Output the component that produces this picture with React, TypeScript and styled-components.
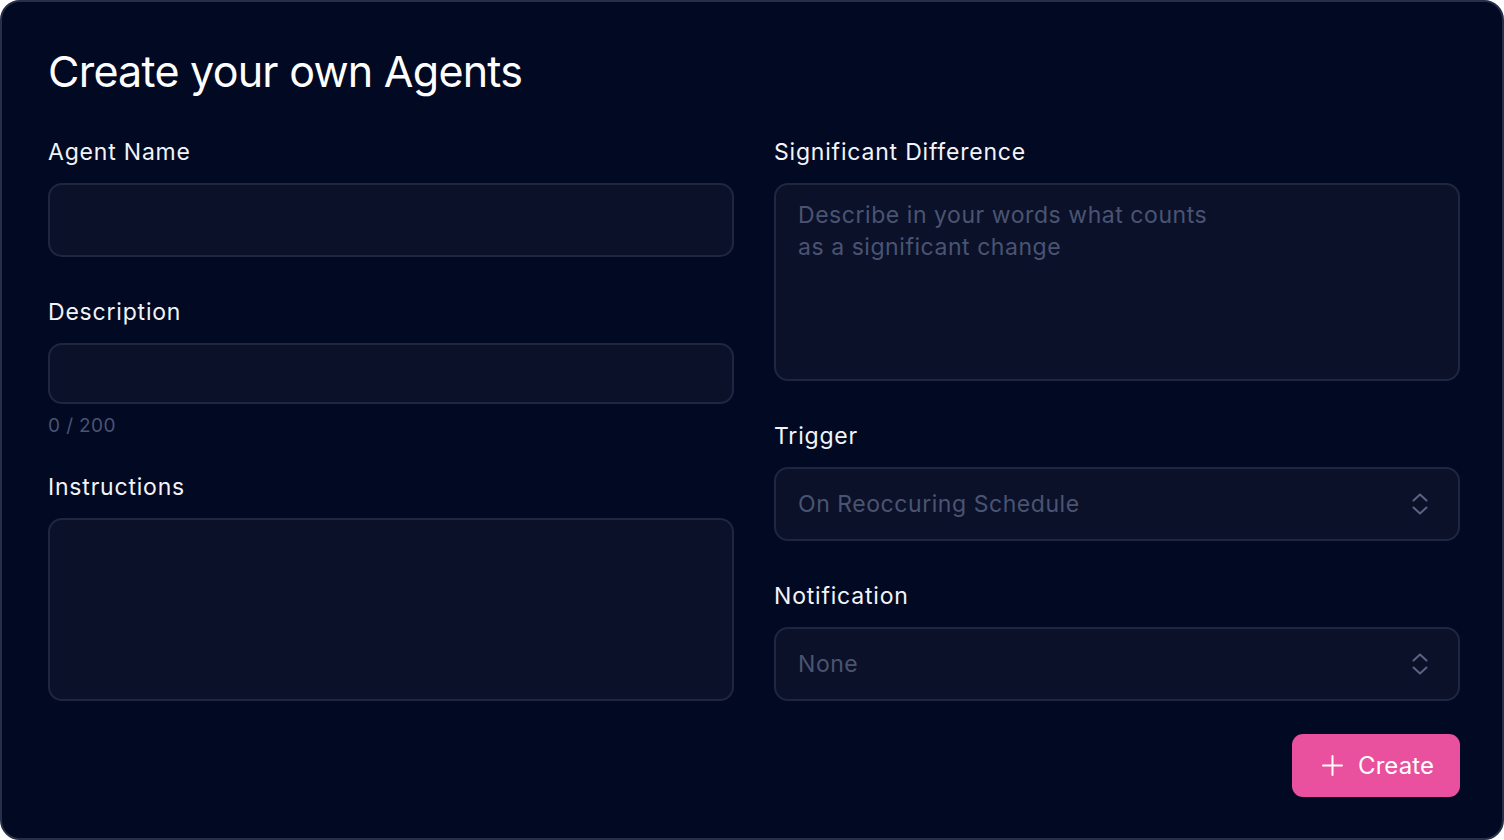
import React from "react";
import styled, { createGlobalStyle } from "styled-components";

const Global = createGlobalStyle`
  html, body { margin: 0; padding: 0; background: #ffffff; }
  * { box-sizing: border-box; }
`;

const Card = styled.form`
  width: 1504px;
  height: 840px;
  background: #020923;
  border: 2px solid #262e48;
  border-radius: 20px;
  padding: 43px 42px 0 46px;
  font-family: Inter, "Liberation Sans", sans-serif;
  color: #f2f4f8;
  display: flex;
  flex-direction: column;
  gap: 40px;
`;

const Title = styled.h1`
  margin: 0;
  font-size: 43px;
  line-height: 52px;
  font-weight: 400;
  letter-spacing: -0.75px;
  color: #ffffff;
`;

const Columns = styled.div`
  display: grid;
  grid-template-columns: 686px 686px;
  column-gap: 40px;
  align-items: start;
`;

const Column = styled.div`
  display: flex;
  flex-direction: column;
  gap: 40px;
`;

const Field = styled.div`
  display: flex;
  flex-direction: column;
`;

const Label = styled.label`
  font-size: 23px;
  line-height: 30px;
  font-weight: 400;
  letter-spacing: 0.8px;
  color: #f2f4f8;
  margin-bottom: 16px;
`;

const controlBase = `
  width: 100%;
  background: #0b1129;
  border: 2px solid #1e2640;
  border-radius: 14px;
  font-family: Inter, "Liberation Sans", sans-serif;
  font-size: 23px;
  letter-spacing: 0.55px;
  color: #f2f4f8;
  padding: 0 22px;
  outline: none;
  &::placeholder { color: #4a5472; opacity: 1; }
`;

const TextInput = styled.input<{ $h: number }>`
  ${controlBase}
  height: ${(p) => p.$h}px;
`;

const TextArea = styled.textarea<{ $h: number }>`
  ${controlBase}
  height: ${(p) => p.$h}px;
  resize: none;
  padding-top: 14px;
  line-height: 32px;
`;

const Counter = styled.div`
  margin-top: 12px;
  margin-bottom: -4px;
  font-size: 19px;
  line-height: 20px;
  color: #4b5472;
  letter-spacing: 0.4px;
`;

const SelectBox = styled.button`
  ${controlBase}
  height: 74px;
  display: flex;
  align-items: center;
  justify-content: space-between;
  padding: 0 30px 0 22px;
  color: #4a5472;
  text-align: left;
  cursor: pointer;
`;

const Actions = styled.div`
  display: flex;
  justify-content: flex-end;
  margin-top: -7px;
`;

const CreateButton = styled.button`
  display: flex;
  align-items: center;
  gap: 15px;
  height: 63px;
  width: 168px;
  padding: 0 0 0 30px;
  border: none;
  border-radius: 11px;
  background: #e9509d;
  color: #ffffff;
  font-family: Inter, "Liberation Sans", sans-serif;
  font-size: 24px;
  letter-spacing: 0.1px;
  cursor: pointer;
`;

const UpDown = () => (
  <svg width="16" height="24" viewBox="0 0 16 24" fill="none" stroke="#5a6482" strokeWidth="2" strokeLinecap="round" strokeLinejoin="round">
    <polyline points="1.5,8.5 8,2.5 14.5,8.5" />
    <polyline points="1.5,15.5 8,21.5 14.5,15.5" />
  </svg>
);

const Plus = () => (
  <svg width="21" height="21" viewBox="0 0 21 21" fill="none" stroke="#ffffff" strokeWidth="2" strokeLinecap="round">
    <line x1="10.5" y1="1" x2="10.5" y2="20" />
    <line x1="1" y1="10.5" x2="20" y2="10.5" />
  </svg>
);

export default function App() {
  return (
    <>
      <Global />
      <Card onSubmit={(e) => e.preventDefault()}>
        <Title>Create your own Agents</Title>
        <Columns>
          <Column>
            <Field>
              <Label>Agent Name</Label>
              <TextInput $h={74} />
            </Field>
            <Field>
              <Label>Description</Label>
              <TextInput $h={61} />
              <Counter>0 / 200</Counter>
            </Field>
            <Field>
              <Label>Instructions</Label>
              <TextArea $h={183} />
            </Field>
          </Column>
          <Column>
            <Field>
              <Label>Significant Difference</Label>
              <TextArea $h={198} placeholder={"Describe in your words what counts\nas a significant change"} />
            </Field>
            <Field>
              <Label>Trigger</Label>
              <SelectBox type="button">
                <span>On Reoccuring Schedule</span>
                <UpDown />
              </SelectBox>
            </Field>
            <Field>
              <Label>Notification</Label>
              <SelectBox type="button">
                <span>None</span>
                <UpDown />
              </SelectBox>
            </Field>
            <Actions>
              <CreateButton type="submit">
                <Plus />
                Create
              </CreateButton>
            </Actions>
          </Column>
        </Columns>
      </Card>
    </>
  );
}
